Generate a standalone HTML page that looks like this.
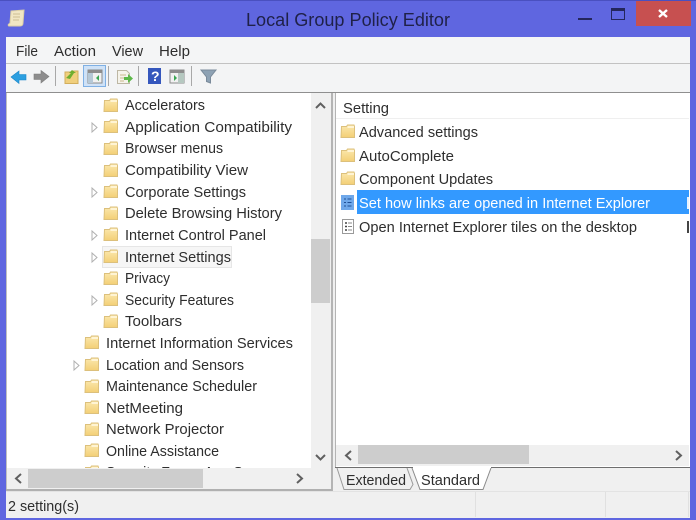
<!DOCTYPE html>
<html><head><meta charset="utf-8"><style>
html,body{margin:0;padding:0;width:696px;height:520px;overflow:hidden;background:#5f66e0}
svg.root{display:block;filter:blur(0.35px)}
text{font-family:"Liberation Sans",sans-serif;font-size:15px;fill:#2e2e2e}
</style></head><body>
<svg class="root" width="696" height="520" viewBox="0 0 696 520" xmlns="http://www.w3.org/2000/svg">
<defs>
<linearGradient id="g" x1="0" y1="0" x2="0" y2="1"><stop offset="0" stop-color="#fbe8ae"/><stop offset="1" stop-color="#f3cf76"/></linearGradient>
<g id="f">
<path d="M0.5 2.500h5l1-1.500h6.500l0.500 1.500v11h-13.500z" fill="url(#g)" stroke="#dcc07c" stroke-width="1"/>
<path d="M6.500 2h6.500v2H6.500z" fill="#fff4d4"/>
</g>
<path id="a" d="M0 0l5 4.500l-5 4.500z" fill="#fff" stroke="#b0b0b0" stroke-width="1"/>
<g id="p">
<path d="M0.500 0.500h11v14h-11z" fill="#fff" stroke="#9a9a9a"/>
<path d="M3 4h2M3 7.500h2M3 11h2" stroke="#444" stroke-width="1.400"/>
<path d="M6 4h4M6 7.500h4M6 11h4" stroke="#888" stroke-width="1"/>
</g>
</defs>

<!-- frame -->
<rect width="696" height="520" fill="#5f66e0"/>
<rect x="0" y="0" width="696" height="1" fill="#4a50c0"/>
<path d="M11 11l13-1l-1 13c0 2-1 3-3 3h-11c-1 0-1-2 0-2l1-1z" fill="#f1e6c4" stroke="#dccfa6"/>
<path d="M13 14h7M13 17h7M13 20h6" stroke="#cdbf95"/>
<text x="246" y="26" style="font-size:18.500px;fill:#1f2148" textLength="204" lengthAdjust="spacingAndGlyphs">Local Group Policy Editor</text>
<rect x="578" y="18" width="14" height="2" fill="#24265c"/>
<rect x="611.500" y="8.500" width="13" height="11" fill="none" stroke="#24265c"/>
<rect x="611" y="8" width="14" height="3" fill="#24265c"/>
<rect x="636" y="1" width="55" height="25" fill="#c75050"/>
<path d="M659 10l8 7M667 10l-8 7" stroke="#fff" stroke-width="2.400"/>

<!-- client -->
<rect x="6" y="37" width="684" height="481" fill="#f0f0f0"/>
<rect x="6" y="37" width="684" height="26" fill="#f4f5f6"/>
<rect x="6" y="63" width="684" height="1" fill="#c2c2c2"/>
<rect x="6" y="64" width="684" height="28" fill="#f3f4f5"/>
<rect x="6" y="92" width="684" height="1" fill="#8f8f8f"/>

<!-- menu -->
<text x="16" y="56" textLength="22" lengthAdjust="spacingAndGlyphs">File</text>
<text x="54" y="56" textLength="42" lengthAdjust="spacingAndGlyphs">Action</text>
<text x="112" y="56" textLength="31" lengthAdjust="spacingAndGlyphs">View</text>
<text x="159" y="56" textLength="31" lengthAdjust="spacingAndGlyphs">Help</text>

<!-- toolbar -->
<path d="M11 77l8-6v3.500h7v5.500h-7v3.500z" fill="#2c9fe0" stroke="#1a85c8" stroke-width="0.600"/>
<path d="M49 76.500l-8-6v3.500h-7v5.500h7v3.500z" fill="#8d8d8d" stroke="#7d7d7d" stroke-width="0.600"/>
<rect x="55" y="66" width="1" height="20" fill="#a8a8a8"/>
<path d="M65 72h6l1-1h6v12.500h-13z" fill="#f0cf7d" stroke="#d2ae5c"/>
<path d="M66 78l5-5h-2l3-3l4 3h-2l-4 6z" fill="#6fae2f"/>
<rect x="83.500" y="65.500" width="22" height="21" fill="#cfe2f7" stroke="#7fb0e4"/>
<rect x="88" y="70" width="14" height="13" fill="#f1f1f1" stroke="#8a8a8a"/>
<rect x="88" y="70" width="14" height="3" fill="#8d8d8d"/>
<rect x="88" y="73" width="5" height="10" fill="#b5c8d6"/>
<path d="M99 75v6l-3-3z" fill="#3aa652"/>
<rect x="108" y="66" width="1" height="20" fill="#a8a8a8"/>
<path d="M117.500 70.500h9l3 3v10h-12z" fill="#f5f3ea" stroke="#bdb7a4"/>
<path d="M120 75h6M120 78h4M120 81h4" stroke="#c9b98f"/>
<path d="M124 77h4v-3l5 4.500l-5 4.500v-3h-4z" fill="#5cb848"/>
<rect x="138" y="66" width="1" height="20" fill="#a8a8a8"/>
<rect x="148" y="68" width="13" height="16" fill="#3557bd"/>
<text x="151" y="81" style="font-size:14px;font-weight:bold;fill:#fff">?</text>
<rect x="170" y="70" width="14" height="13" fill="#f1f1f1" stroke="#8a8a8a"/>
<rect x="170" y="70" width="14" height="3" fill="#8d8d8d"/>
<rect x="178" y="73" width="6" height="10" fill="#b5c8c0"/>
<path d="M174 75v6l3-3z" fill="#3aa652"/>
<rect x="191" y="66" width="1" height="20" fill="#a8a8a8"/>
<path d="M201 70h15l-5.500 7v6l-4-1.500v-4.500z" fill="#8ea2b4" stroke="#7a8a9a"/>

<!-- left pane -->
<rect x="6" y="93" width="326" height="397" fill="#fff"/>
<rect x="6" y="93" width="1" height="397" fill="#c0c0c0"/>
<rect x="331" y="93" width="2" height="398" fill="#b4b4b4"/>
<rect x="6" y="489" width="326" height="2" fill="#b0b0b0"/>
<rect x="311" y="93" width="20" height="375" fill="#f0f0f0"/>
<rect x="311" y="239" width="19" height="64" fill="#cdcdcd"/>
<path d="M316 108l4.500-4.500l4.500 4.500" fill="none" stroke="#606060" stroke-width="2"/>
<path d="M316 455l4.500 4.500l4.500-4.500" fill="none" stroke="#606060" stroke-width="2"/>
<rect x="7" y="468" width="324" height="21" fill="#f0f0f0"/>
<rect x="28" y="469" width="175" height="19" fill="#cdcdcd"/>
<path d="M21 474l-5 4.500l5 4.500" fill="none" stroke="#606060" stroke-width="2"/>
<path d="M297 474l5 4.500l-5 4.500" fill="none" stroke="#606060" stroke-width="2"/>

<!-- selected tree row -->
<rect x="102.500" y="246.500" width="129" height="21" fill="#f6f6f6" stroke="#e6e6e6"/>

<!-- tree -->
<use href="#f" x="104" y="98"/><text x="125" y="110" textLength="80" lengthAdjust="spacingAndGlyphs">Accelerators</text>
<use href="#a" x="92" y="123"/><use href="#f" x="104" y="119"/><text x="125" y="132" textLength="167" lengthAdjust="spacingAndGlyphs">Application Compatibility</text>
<use href="#f" x="104" y="141"/><text x="125" y="153" textLength="98" lengthAdjust="spacingAndGlyphs">Browser menus</text>
<use href="#f" x="104" y="163"/><text x="125" y="175" textLength="123" lengthAdjust="spacingAndGlyphs">Compatibility View</text>
<use href="#a" x="92" y="188"/><use href="#f" x="104" y="184"/><text x="125" y="197" textLength="121" lengthAdjust="spacingAndGlyphs">Corporate Settings</text>
<use href="#f" x="104" y="206"/><text x="125" y="218" textLength="157" lengthAdjust="spacingAndGlyphs">Delete Browsing History</text>
<use href="#a" x="92" y="231"/><use href="#f" x="104" y="227"/><text x="125" y="240" textLength="141" lengthAdjust="spacingAndGlyphs">Internet Control Panel</text>
<use href="#a" x="92" y="253"/><use href="#f" x="104" y="249"/><text x="125" y="262" textLength="106" lengthAdjust="spacingAndGlyphs">Internet Settings</text>
<use href="#f" x="104" y="271"/><text x="125" y="283" textLength="45" lengthAdjust="spacingAndGlyphs">Privacy</text>
<use href="#a" x="92" y="296"/><use href="#f" x="104" y="292"/><text x="125" y="305" textLength="109" lengthAdjust="spacingAndGlyphs">Security Features</text>
<use href="#f" x="104" y="314"/><text x="125" y="326" textLength="57" lengthAdjust="spacingAndGlyphs">Toolbars</text>
<use href="#f" x="85" y="335"/><text x="106" y="348" textLength="187" lengthAdjust="spacingAndGlyphs">Internet Information Services</text>
<use href="#a" x="74" y="361"/><use href="#f" x="85" y="357"/><text x="106" y="370" textLength="138" lengthAdjust="spacingAndGlyphs">Location and Sensors</text>
<use href="#f" x="85" y="379"/><text x="106" y="391" textLength="151" lengthAdjust="spacingAndGlyphs">Maintenance Scheduler</text>
<use href="#f" x="85" y="400"/><text x="106" y="413" textLength="77" lengthAdjust="spacingAndGlyphs">NetMeeting</text>
<use href="#f" x="85" y="422"/><text x="106" y="434" textLength="118" lengthAdjust="spacingAndGlyphs">Network Projector</text>
<use href="#f" x="85" y="443"/><text x="106" y="456" textLength="113" lengthAdjust="spacingAndGlyphs">Online Assistance</text>
<svg x="70" y="460" width="241" height="8" viewBox="70 460 241 8"><use href="#f" x="85" y="465"/><text x="106" y="477" textLength="144" lengthAdjust="spacingAndGlyphs">Security Zones App Sv</text></svg>

<!-- right pane -->
<rect x="335" y="93" width="355" height="374" fill="#fff"/>
<rect x="335" y="93" width="1" height="374" fill="#b4b4b4"/>
<rect x="336" y="118" width="353" height="1" fill="#efefef"/>
<text x="343" y="113" textLength="46" lengthAdjust="spacingAndGlyphs">Setting</text>

<use href="#f" x="341" y="124"/><text x="359" y="137" textLength="119" lengthAdjust="spacingAndGlyphs">Advanced settings</text>
<use href="#f" x="341" y="148"/><text x="359" y="161" textLength="95" lengthAdjust="spacingAndGlyphs">AutoComplete</text>
<use href="#f" x="341" y="171"/><text x="359" y="184" textLength="134" lengthAdjust="spacingAndGlyphs">Component Updates</text>
<rect x="357" y="190" width="332" height="24" fill="#3399ff"/>
<rect x="341" y="195" width="13" height="15" fill="#6fa8ea"/>
<path d="M344 199h2M344 202.500h2M344 206h2M347.500 199h4M347.500 202.500h4M347.500 206h4" stroke="#1f4f96" stroke-width="1"/>
<text x="359" y="208" style="fill:#fff" textLength="291" lengthAdjust="spacingAndGlyphs">Set how links are opened in Internet Explorer</text>
<rect x="687" y="197" width="2" height="12" fill="#e8f2ff"/>
<use href="#p" x="342" y="219"/><text x="359" y="232" textLength="278" lengthAdjust="spacingAndGlyphs">Open Internet Explorer tiles on the desktop</text>
<rect x="687" y="221" width="2" height="12" fill="#444"/>

<rect x="336" y="445" width="353" height="21" fill="#f0f0f0"/>
<rect x="358" y="445" width="171" height="19" fill="#cdcdcd"/>
<path d="M351 451l-5 4.500l5 4.500" fill="none" stroke="#606060" stroke-width="2"/>
<path d="M676 451l5 4.500l-5 4.500" fill="none" stroke="#606060" stroke-width="2"/>
<rect x="335" y="467" width="355" height="1" fill="#6e6e6e"/>

<!-- tabs -->
<path d="M337 468l7 21.500h66l3-5l-6-16.500" fill="#f0f0f0" stroke="#9a9a9a"/>
<path d="M412 468l8 21.500h63l8-21.500" fill="#fff" stroke="#8a8a8a"/>
<rect x="413" y="467" width="78" height="1" fill="#fff"/>
<text x="346" y="485" textLength="60" lengthAdjust="spacingAndGlyphs">Extended</text>
<text x="421" y="485" textLength="59" lengthAdjust="spacingAndGlyphs">Standard</text>

<!-- status -->
<rect x="6" y="491" width="684" height="1" fill="#e3e3e3"/>
<rect x="475" y="492" width="1" height="25" fill="#e0e0e0"/>
<rect x="605" y="492" width="1" height="25" fill="#e0e0e0"/>
<rect x="688" y="492" width="1" height="25" fill="#e0e0e0"/>
<text x="8" y="511" textLength="71" lengthAdjust="spacingAndGlyphs">2 setting(s)</text>
</svg>
</body></html>
